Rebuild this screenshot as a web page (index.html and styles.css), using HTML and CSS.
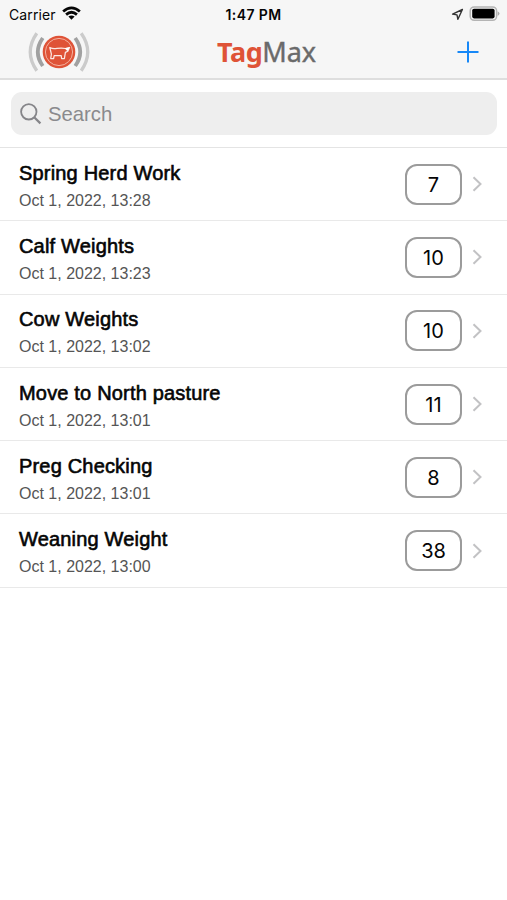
FILE: index.html
```html
<!DOCTYPE html>
<html lang="en">
<head>
<meta charset="utf-8">
<meta name="viewport" content="width=device-width, initial-scale=1">
<title>TagMax</title>
<link rel="stylesheet" href="styles.css">
</head>
<body>
<header class="header">
  <div class="status">
    <div class="carrier">
      <span>Carrier</span>
      <svg class="wifi" width="19" height="14" viewBox="0 0 20 14" fill="none" stroke="#050505" stroke-width="2.9"><path d="M1.2 5.4Q10-2.2 18.8 5.4M4.3 8.7Q10 3.8 15.7 8.7"/><path d="M6.7 10.8Q10 8.2 13.3 10.8L10 14Z" fill="#050505" stroke="none"/></svg>
    </div>
    <time class="clock">1:47 PM</time>
    <div class="power">
      <svg width="13" height="13" viewBox="0 0 13 13" fill="none" stroke="#333" stroke-width="1.4" stroke-linejoin="round"><path d="M11.4 1.5 1.6 6.1 6 6.9 6.9 11.3Z"/></svg>
      <svg width="32" height="16" viewBox="0 0 32 16"><rect x="1.2" y=".9" width="26.4" height="13.4" rx="4" fill="#f6f6f6" stroke="#b4b4b4" stroke-width="1.5"/><rect x="3.2" y="2.8" width="22.4" height="9.6" rx="1.8"/><path d="M28.7 5.2Q32.3 7.6 28.7 10Z" fill="#aaa"/></svg>
    </div>
  </div>
  <div class="nav">
    <svg class="logo" width="64" height="42" viewBox="0 0 64 42" fill="none">
      <path d="M9.8 2.3Q-3.3 21 9.8 39.7M54.2 2.3Q67.3 21 54.2 39.7" stroke="#cbcbcb" stroke-width="3.3"/>
      <path d="M15.8 7Q5.8 21 15.8 35M48.2 7Q58.2 21 48.2 35" stroke="#a1a1a1" stroke-width="3.8"/>
      <circle cx="32" cy="21" r="16.3" fill="#df5337"/>
      <circle cx="32" cy="21" r="13.6" stroke="#f4b1a0" stroke-width="1"/>
      <path d="M22.8 16.5Q26 18.4 30 17.4 35 16.8 38.4 17.5L42.5 16.5 40.8 20.2 38.4 21.4 37.4 27.5H34.6L34.2 24.6H27.2L26.6 27.5H23.7L24.4 23.2 22.8 16.5Z" stroke="#fce9e4" stroke-width="1.25" stroke-linejoin="round"/>
      <path d="m37.6 17.2 5-1-2.2 4Z" fill="#fff"/>
    </svg>
    <h1 class="brand"><span class="tag">Tag</span><span class="max">Max</span></h1>
    <svg class="add" width="22" height="22" viewBox="0 0 22 22" stroke="#1788f7" stroke-width="2"><path d="M11 .5v21M.5 11h21"/></svg>
  </div>
</header>
<main>
  <div class="search-area">
    <div class="search">
      <svg width="22" height="22" viewBox="0 0 22 22" fill="none" stroke="#858589" stroke-width="1.8"><circle cx="8.8" cy="8.8" r="7.7"/><path d="m14.2 14.2 6.2 6.2" stroke-width="2.2"/></svg>
      <span>Search</span>
    </div>
  </div>
  <ul class="list">
    <li class="row"><div class="info"><h2>Spring Herd Work</h2><p>Oct 1, 2022, 13:28</p></div><span class="count">7</span><svg class="chevron" width="11" height="16" viewBox="0 0 11 16"><path d="m1.5 1.2 7 6.8-7 6.8"/></svg></li>
    <li class="row"><div class="info"><h2>Calf Weights</h2><p>Oct 1, 2022, 13:23</p></div><span class="count">10</span><svg class="chevron" width="11" height="16" viewBox="0 0 11 16"><path d="m1.5 1.2 7 6.8-7 6.8"/></svg></li>
    <li class="row"><div class="info"><h2>Cow Weights</h2><p>Oct 1, 2022, 13:02</p></div><span class="count">10</span><svg class="chevron" width="11" height="16" viewBox="0 0 11 16"><path d="m1.5 1.2 7 6.8-7 6.8"/></svg></li>
    <li class="row"><div class="info"><h2>Move to North pasture</h2><p>Oct 1, 2022, 13:01</p></div><span class="count">11</span><svg class="chevron" width="11" height="16" viewBox="0 0 11 16"><path d="m1.5 1.2 7 6.8-7 6.8"/></svg></li>
    <li class="row"><div class="info"><h2>Preg Checking</h2><p>Oct 1, 2022, 13:01</p></div><span class="count">8</span><svg class="chevron" width="11" height="16" viewBox="0 0 11 16"><path d="m1.5 1.2 7 6.8-7 6.8"/></svg></li>
    <li class="row"><div class="info"><h2>Weaning Weight</h2><p>Oct 1, 2022, 13:00</p></div><span class="count">38</span><svg class="chevron" width="11" height="16" viewBox="0 0 11 16"><path d="m1.5 1.2 7 6.8-7 6.8"/></svg></li>
  </ul>
</main>
</body>
</html>
```
FILE: styles.css
```css
* { box-sizing: border-box; }
body {
  margin: 0;
  min-height: 100vh;
  background: #fff;
  color: #050505;
  font-family: "Liberation Sans", Arial, sans-serif;
}
h1, h2, p, ul { margin: 0; padding: 0; }
svg { display: block; flex: none; }
.header {
  height: 80px;
  background: #f6f6f6;
  border-bottom: 2px solid #dedede;
}
.status {
  display: grid;
  grid-template-columns: 1fr auto 1fr;
  align-items: center;
  height: 27px;
  padding: 0 6px 0 8px;
  font: 400 14px/27px Inter, sans-serif;
}
.carrier { display: flex; align-items: center; gap: 6px; padding-left: 1px; letter-spacing: .12px; }
.wifi { margin-top: -2px; }
.clock { font-weight: 600; font-size: 14px; letter-spacing: .4px; padding-top: 1px; margin-right: 2px; }
.power { display: flex; align-items: center; justify-content: flex-end; gap: 5px; }
.nav {
  display: grid;
  grid-template-columns: 1fr auto 1fr;
  align-items: center;
  height: 50px;
  padding: 0 28px 0 27px;
}
.brand {
  font: 400 27px/50px "Noto Sans", sans-serif;
  padding-left: 27px;
}
.tag { color: #df5337; font-weight: 700; letter-spacing: -.5px; }
.max { color: #6a6a6a; letter-spacing: -.1px; -webkit-text-stroke: .4px #6a6a6a; }
.add { justify-self: end; }
.search-area {
  height: 68px;
  padding: 12px 10px 12px 11px;
  border-bottom: 1px solid #e4e4e4;
}
.search {
  display: flex;
  align-items: center;
  gap: 6px;
  height: 43px;
  padding-left: 9px;
  border-radius: 11px;
  background: #eee;
  color: #8a8a8d;
  font-size: 20.3px;
}
.search span { padding-top: 1px; }
.list { list-style: none; }
.row {
  display: flex;
  align-items: center;
  height: 73.3px;
  padding: 0 24px 0 19px;
  border-bottom: 1.5px solid #e9e9e9;
}
.info { flex: 1; padding-top: 5px; }
.info h2 {
  font-size: 20px;
  font-weight: 400;
  line-height: 27px;
  letter-spacing: .18px;
  -webkit-text-stroke: .6px #050505;
}
.info p { font-size: 16px; line-height: 27px; color: #555; }
.count {
  width: 57px;
  height: 41px;
  margin-right: 10px;
  border: 2px solid #9b9b9b;
  border-radius: 12px;
  font: 400 20px/39px Inter, sans-serif;
  text-align: center;
}
.chevron { fill: none; stroke: #c2c2c4; stroke-width: 2; }
```
